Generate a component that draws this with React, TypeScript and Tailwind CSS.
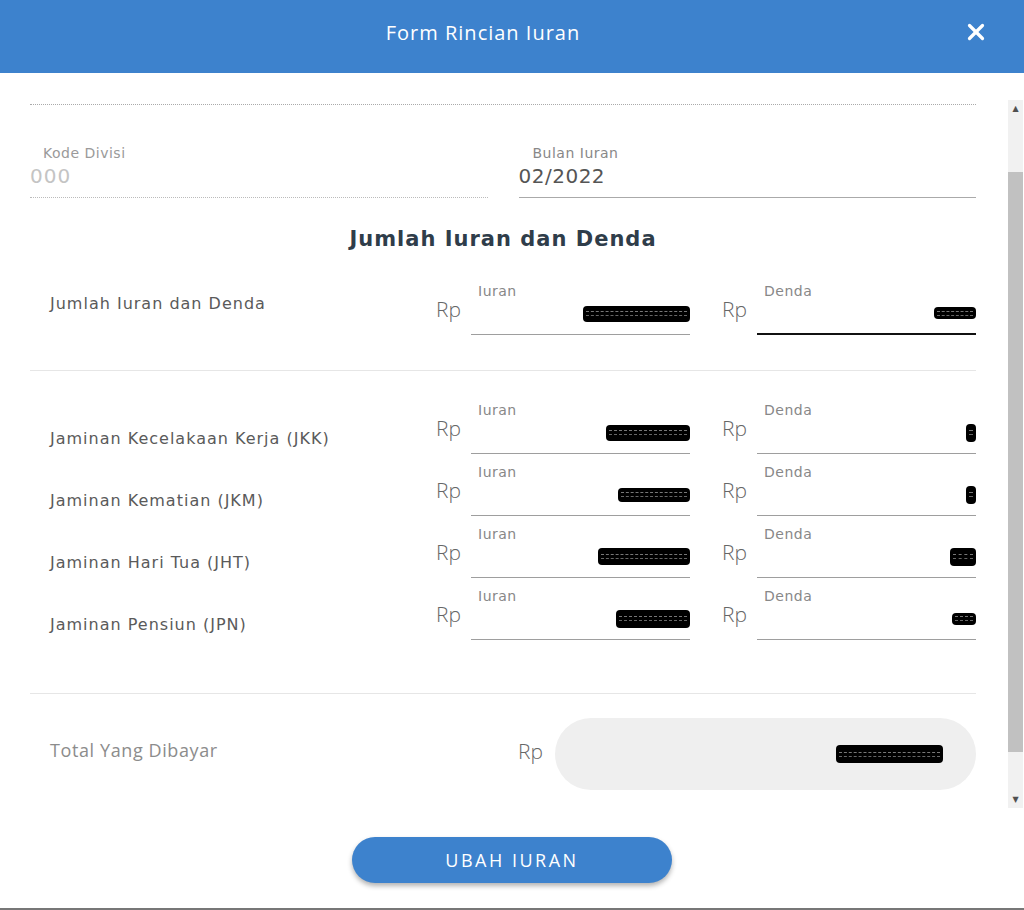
import { X } from 'lucide-react'

// redacted amount: black scribble with a faint dashed stroke through it
function Blot({ className }: { className: string }) {
  return (
    <div className={`flex flex-col justify-center gap-[3px] rounded-[4px] bg-black px-[3px] ${className}`}>
      <div className="border-t border-dashed border-[#777]" />
      <div className="border-t border-dashed border-[#666]" />
    </div>
  )
}

function MoneyField({ label, blot, focused }: { label: string; blot: string; focused?: boolean }) {
  return (
    <div className="flex w-[254px]">
      <span className="w-[35px] pt-[12px] text-[21px] leading-[28px] font-light text-[#666] [font-family:'Open_Sans',sans-serif]">
        Rp
      </span>
      <div
        className={`flex h-[52px] w-[219px] flex-col ${
          focused ? 'border-b-2 border-[#111]' : 'border-b border-[#9e9e9e]'
        }`}
      >
        <span className="pl-[7px] text-[14px] leading-[16px] tracking-[0.5px] text-[#888]">{label}</span>
        <div className="flex flex-1 items-center justify-end pb-[6px]">
          <Blot className={blot} />
        </div>
      </div>
    </div>
  )
}

function ContribRow({
  title,
  iuran,
  denda,
  labelPad,
  focused,
}: {
  title: string
  iuran: string
  denda: string
  labelPad: string
  focused?: boolean
}) {
  return (
    <div className="flex items-start justify-between">
      <span className={`pl-[20px] text-[16px] leading-[22px] tracking-[1px] text-[#5a5a5a] ${labelPad}`}>{title}</span>
      <div className="flex gap-[32px]">
        <MoneyField label="Iuran" blot={iuran} />
        <MoneyField label="Denda" blot={denda} focused={focused} />
      </div>
    </div>
  )
}

export default function App() {
  return (
    <div className="flex h-[910px] w-full flex-col bg-white [font-family:'DejaVu_Sans',sans-serif] border-b-2 border-[#777]">
      <header className="relative flex h-[73px] shrink-0 items-center justify-center bg-[#3d82cd]">
        <h1 className="mr-[58px] pb-[8px] text-[20px] tracking-[1px] text-white [font-family:'Open_Sans',sans-serif]">
          Form Rincian Iuran
        </h1>
        <button className="absolute right-[35px] top-[19px] text-white" aria-label="Tutup">
          <X className="h-[26px] w-[26px]" strokeWidth={3} />
        </button>
      </header>

      <div className="mt-[27px] flex h-[708px] shrink-0">
        <div className="flex-1 overflow-hidden pl-[30px] pr-[32px]">
          <div className="mt-[4px] border-t border-dotted border-[#aaa]" />

          <div className="mt-[40px] grid grid-cols-2 gap-[31px]">
            <div className="flex flex-col border-b border-dotted border-[#bbb] pb-[9px]">
              <span className="pl-[13px] text-[14px] leading-[16px] tracking-[0.5px] text-[#9a9a9a]">Kode Divisi</span>
              <span className="mt-[3px] text-[20px] leading-[24px] tracking-[1px] text-[#c4c4c4]">000</span>
            </div>
            <div className="flex flex-col border-b border-[#aaa] pb-[9px]">
              <span className="pl-[14px] text-[14px] leading-[16px] tracking-[0.5px] text-[#888]">Bulan Iuran</span>
              <span className="mt-[3px] text-[20px] leading-[24px] tracking-[0.5px] text-[#555]">02/2022</span>
            </div>
          </div>

          <h2 className="mt-[27px] text-center text-[21px] leading-[28px] font-bold tracking-[1px] text-[#2f3d4a]">
            Jumlah Iuran dan Denda
          </h2>

          <div className="mt-[30px]">
            <ContribRow
              title="Jumlah Iuran dan Denda"
              iuran="w-[107px] h-[16px]"
              denda="w-[42px] h-[12px]"
              labelPad="pt-[10px]"
              focused
            />
          </div>

          <div className="mt-[35px] border-t border-[#e6e6e6]" />

          <div className="mt-[31px] flex flex-col gap-[10px]">
            <ContribRow title="Jaminan Kecelakaan Kerja (JKK)" iuran="w-[84px] h-[16px]" denda="w-[10px] h-[18px]" labelPad="pt-[26px]" />
            <ContribRow title="Jaminan Kematian (JKM)" iuran="w-[72px] h-[14px]" denda="w-[10px] h-[18px]" labelPad="pt-[26px]" />
            <ContribRow title="Jaminan Hari Tua (JHT)" iuran="w-[92px] h-[17px]" denda="w-[26px] h-[18px]" labelPad="pt-[26px]" />
            <ContribRow title="Jaminan Pensiun (JPN)" iuran="w-[74px] h-[18px]" denda="w-[24px] h-[12px]" labelPad="pt-[26px]" />
          </div>

          <div className="mt-[53px] border-t border-[#e6e6e6]" />

          <div className="mt-[24px] flex items-center">
            <span className="flex-1 pb-[7px] pl-[20px] text-[18px] tracking-[0.6px] text-[#8c8c8c] [font-family:'Open_Sans',sans-serif]">
              Total Yang Dibayar
            </span>
            <span className="w-[37px] pb-[5px] text-[21px] font-light text-[#666] [font-family:'Open_Sans',sans-serif]">Rp</span>
            <div className="flex h-[72px] w-[421px] items-center justify-end rounded-full bg-[#efefef] pr-[33px]">
              <Blot className="w-[107px] h-[18px]" />
            </div>
          </div>
        </div>

        <div className="mr-[1px] flex w-[15px] flex-col items-center bg-[#f1f1f1]">
          <div className="flex h-[17px] items-center justify-center text-[8px] leading-none text-[#505050]">▲</div>
          <div className="mt-[55px] h-[580px] w-full bg-[#c1c1c1]" />
          <div className="flex flex-1 items-end justify-center pb-[4px] text-[8px] leading-none text-[#505050]">▼</div>
        </div>
      </div>

      <div className="flex justify-center pt-[29px]">
        <button className="h-[46px] w-[320px] rounded-full bg-[#3d82cd] text-[18px] tracking-[2.5px] text-white shadow-[0_3px_5px_rgba(0,0,0,0.3)] [font-family:'Open_Sans',sans-serif]">
          UBAH IURAN
        </button>
      </div>
    </div>
  )
}
